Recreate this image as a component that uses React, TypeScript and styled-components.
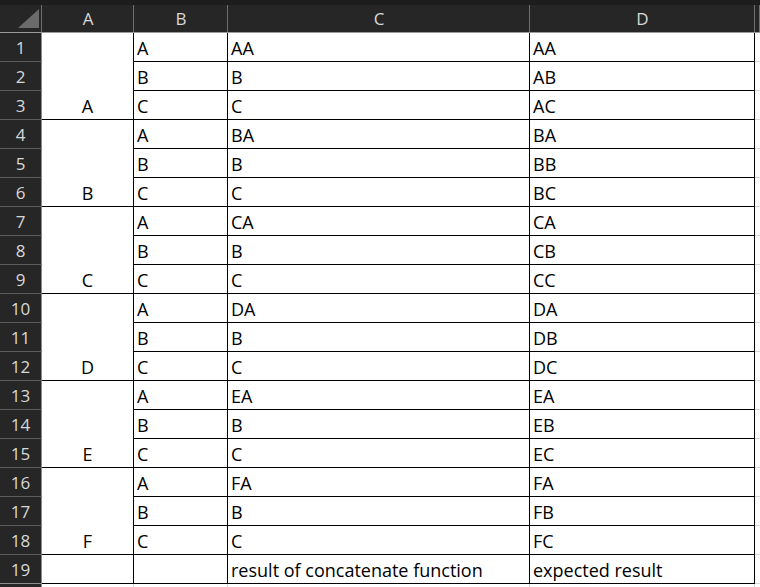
import styled, { createGlobalStyle } from 'styled-components'

const GlobalStyle = createGlobalStyle`
  html, body {
    margin: 0;
    padding: 0;
    background: #ffffff;
    overflow: hidden;
  }
`

const groups = ['A', 'B', 'C', 'D', 'E', 'F']
const sub = ['A', 'B', 'C']

const Sheet = styled.div`
  display: grid;
  grid-template-columns: 42px 92px 94px 302px 225px 1fr;
  grid-template-rows: 33px repeat(20, 29px);
  width: 760px;
  height: 587px;
  overflow: hidden;
  background: #ffffff;
  font-family: 'Open Sans', 'Noto Sans', sans-serif;
  font-size: 18px;
`

const headBg = `
  background:
    linear-gradient(#1d1d1d, #1d1d1d) top / 100% 5px no-repeat,
    linear-gradient(to left, #707070 1px, transparent 1px),
    #262626;
`

const ColumnHead = styled.div`
  ${headBg}
  border-bottom: 1px solid #9b9b9b;
  color: #d8d8d8;
  font-size: 17px;
  display: flex;
  align-items: center;
  justify-content: center;
  padding-top: 5px;
`

const Corner = styled.div`
  ${headBg}
  border-bottom: 1px solid #9b9b9b;
  display: flex;
  align-items: flex-end;
  justify-content: flex-end;
  padding: 0 3px 4px 0;
`

const RowHead = styled.div<{ $last?: boolean }>`
  background: #262626;
  border-right: 1px solid #8c8c8c;
  border-bottom: 1px solid ${(p) => (p.$last ? '#8c8c8c' : '#5c5c5c')};
  color: #d8d8d8;
  font-size: 17px;
  display: flex;
  align-items: center;
  justify-content: center;
`

const Cell = styled.div<{ $span?: number; $center?: boolean; $faint?: boolean }>`
  grid-row: span ${(p) => p.$span ?? 1};
  border-right: 1px solid ${(p) => (p.$faint ? '#d4d4d4' : '#000')};
  border-bottom: 1px solid ${(p) => (p.$faint ? '#d4d4d4' : '#000')};
  color: #000;
  display: flex;
  align-items: flex-end;
  justify-content: ${(p) => (p.$center ? 'center' : 'flex-start')};
  padding: 0 0 3px ${(p) => (p.$center ? '0' : '3px')};
  line-height: 20px;
  white-space: nowrap;
  overflow: hidden;
`

const Spare = styled.div`
  border-bottom: 1px solid #d4d4d4;
`

type RowData = { b: string; c: string; d: string; group?: string }

export default function App() {
  const rows: RowData[] = []
  groups.forEach((g) => {
    sub.forEach((s, i) => {
      rows.push({
        b: s,
        c: i === 0 ? g + 'A' : s,
        d: g + s,
        group: i === 0 ? g : undefined,
      })
    })
  })

  return (
    <>
      <GlobalStyle />
      <Sheet>
        <Corner>
          <svg width="21" height="19" viewBox="0 0 21 19">
            <polygon points="21,0 21,19 0,19" fill="#6b6b6b" />
          </svg>
        </Corner>
        <ColumnHead>A</ColumnHead>
        <ColumnHead>B</ColumnHead>
        <ColumnHead>C</ColumnHead>
        <ColumnHead>D</ColumnHead>
        <ColumnHead />

        {rows.map((r, i) => (
          <Row key={i} n={i + 1} row={r} />
        ))}

        <RowHead $last>19</RowHead>
        <Cell />
        <Cell />
        <Cell>result of concatenate function</Cell>
        <Cell>expected result</Cell>
        <Spare />

        {/* row 20 only peeks in at the bottom edge */}
        <RowHead />
        <Cell $faint />
        <Cell $faint />
        <Cell $faint />
        <Cell $faint />
        <Spare />
      </Sheet>
    </>
  )
}

function Row({ n, row }: { n: number; row: RowData }) {
  return (
    <>
      <RowHead>{n}</RowHead>
      {row.group && (
        <Cell $span={3} $center>
          {row.group}
        </Cell>
      )}
      <Cell>{row.b}</Cell>
      <Cell>{row.c}</Cell>
      <Cell>{row.d}</Cell>
      <Spare />
    </>
  )
}
